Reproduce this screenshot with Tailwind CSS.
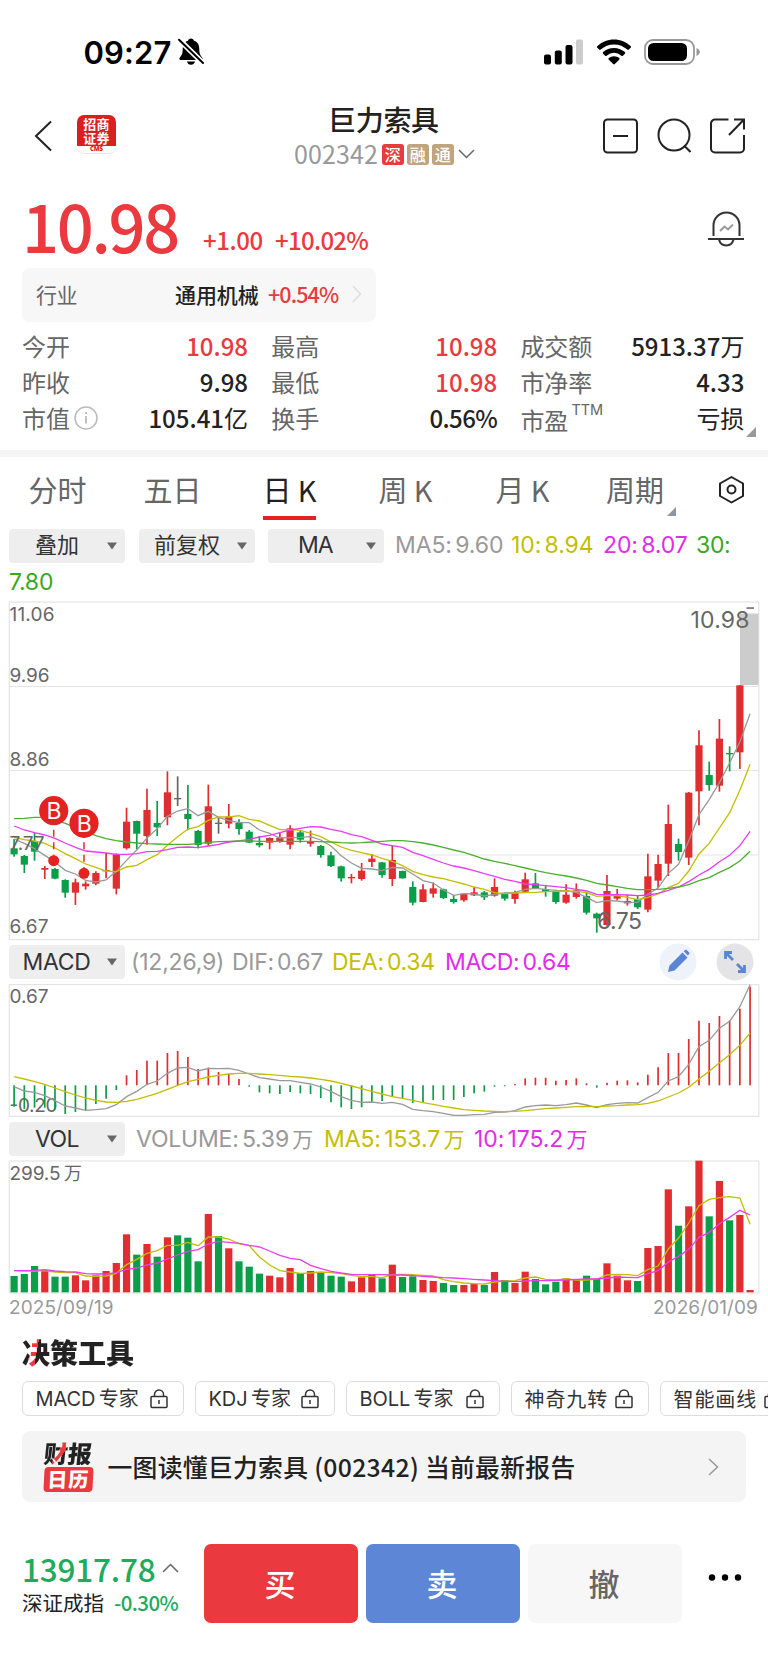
<!DOCTYPE html>
<html lang="zh-CN">
<head>
<meta charset="utf-8">
<title>巨力索具 002342</title>
<script src="https://cdn.jsdelivr.net/npm/@tailwindcss/browser@4"></script>
</head>
<body class="bg-white">
<div class="w-[768px] h-[1665px] overflow-hidden bg-white flex flex-col text-[#222] whitespace-nowrap font-['Noto_Sans_CJK_SC',sans-serif]">

  <!-- status bar -->
  <div class="h-[104px] shrink-0 flex items-center pl-[83.500px] pr-[67px]">
    <span class="font-['Inter',sans-serif] font-semibold text-[31px] tracking-[0.1px] text-black leading-none">09:27</span>
    <svg class="ml-1.5" width="28" height="30" viewBox="0 0 28 30"><path d="M14 1.500c1.600 0 2.800 1 3 2.300 4 1.300 5.300 4.600 5.300 8.700 0 4.500 1.200 6 3 8.200 .8 1 .4 2.300-1.100 2.300H3.800c-1.500 0-1.900-1.300-1.100-2.300 1.800-2.200 3-3.700 3-8.200 0-4.100 1.300-7.400 5.300-8.700 .2-1.300 1.400-2.300 3-2.300zM10 24.500h8c-.3 2-2 3.300-4 3.300s-3.700-1.300-4-3.300z" fill="#000"/><path d="M1 1.500 27 27" stroke="#fff" stroke-width="5.500"/><path d="M2 2.800 26 26" stroke="#000" stroke-width="2" stroke-linecap="round"/></svg>
    <div class="grow"></div>
    <svg width="39" height="26" viewBox="0 0 39 26"><rect x="0" y="15.500" width="7" height="10" rx="2"/><rect x="10.800" y="11.500" width="7" height="14" rx="2"/><rect x="21.500" y="6" width="7" height="19.500" rx="2"/><rect x="32" y="0.500" width="7" height="25" rx="2" fill="#ccc"/></svg>
    <svg class="ml-3.5" width="34" height="26" viewBox="0 0 34 26"><path d="M17 .5c6.400 0 12.200 2.500 16.600 6.600.5.500.5 1.100.1 1.600l-1.900 1.900c-.4.400-1 .4-1.500 0A19.400 19.400 0 0 0 17 5.400 19.400 19.400 0 0 0 3.700 10.600c-.5.400-1.100.4-1.500 0L.3 8.700c-.4-.5-.4-1.100.1-1.600C4.800 3 10.600.5 17 .5z"/><path d="M17 8.900c4.200 0 8 1.600 10.900 4.200.5.500.5 1.100 0 1.600l-2 2c-.4.400-1 .4-1.500 0A11 11 0 0 0 17 13.800a11 11 0 0 0-7.400 2.900c-.5.400-1.100.4-1.500 0l-2-2c-.5-.5-.5-1.100 0-1.600A16.200 16.200 0 0 1 17 8.900z"/><path d="M17 17.200c2 0 3.800.7 5.200 1.900.5.500.5 1.100 0 1.600l-4.400 4.400c-.5.500-1.100.5-1.600 0l-4.400-4.400c-.5-.5-.5-1.100 0-1.600A8 8 0 0 1 17 17.200z"/></svg>
    <svg class="ml-[13px]" width="57" height="26" viewBox="0 0 57 26"><rect x="1" y="1" width="49" height="24" rx="8" fill="none" stroke="#999" stroke-width="1.800"/><rect x="4" y="4" width="39" height="18" rx="5.500"/><path d="M52.500 9c2 .8 3.300 2.200 3.300 4s-1.300 3.200-3.300 4z" fill="#999"/></svg>
  </div>

  <!-- title bar -->
  <div class="h-[66px] shrink-0 grid grid-cols-[294px_1fr_294px]">
    <div class="flex pl-[34px] pt-[11px]">
      <svg class="mt-[5px]" width="19" height="32" viewBox="0 0 19 32"><path d="M17 1.500 2 16 17 30.500" fill="none" stroke="#222" stroke-width="2"/></svg>
      <div class="ml-6 w-[39px] h-[39px] rounded-[7px] bg-white border-b border-gray-200 overflow-hidden flex flex-col items-center">
        <div class="w-[39px] h-[31px] bg-[#da1f1f] text-white text-[13px] leading-[14px] tracking-[0.3px] font-bold flex flex-col items-center justify-center shrink-0"><div>招商<br>证券</div></div>
        <span class="font-['Open_Sans',sans-serif] text-[6px] leading-[7px] font-extrabold text-[#da1f1f]">CMS</span>
      </div>
    </div>
    <div class="flex flex-col">
      <div class="-mt-[2px] pl-[34px] text-[28px] leading-[34px] tracking-[-0.3px] font-medium">巨力索具</div>
      <div class="flex items-center h-8 mt-[2px]">
        <span class="text-[25px] leading-[28px] pb-[3px] tracking-[0.1px] text-[#999]">002342</span>
        <span class="ml-1 w-[22px] h-[21px] rounded-[3px] bg-[#ea3a40] text-white text-[16px] font-medium leading-[20px] text-center">深</span>
        <span class="ml-[3px] w-[22px] h-[21px] rounded-[3px] bg-[#bfa47e] text-white text-[16px] font-medium leading-[20px] text-center">融</span>
        <span class="ml-[3px] w-[22px] h-[21px] rounded-[3px] bg-[#bfa47e] text-white text-[16px] font-medium leading-[20px] text-center">通</span>
        <svg class="ml-1" width="17" height="10" viewBox="0 0 17 10"><path d="M1 1l7.500 7.500L16 1" fill="none" stroke="#666" stroke-width="1.500"/></svg>
      </div>
    </div>
    <div class="flex justify-end pr-[24px] pt-[14px] gap-[19px]">
      <svg width="35" height="36" viewBox="0 0 35 36" fill="none" stroke="#222" stroke-width="2"><rect x="1" y="1.500" width="33" height="33" rx="3.500"/><path d="M10 18h15"/></svg>
      <svg width="34" height="36" viewBox="0 0 34 36" fill="none" stroke="#222" stroke-width="2"><circle cx="17" cy="17" r="15.500"/><path d="M27 27.500l6.500 6.500"/></svg>
      <svg width="35" height="36" viewBox="0 0 35 36" fill="none" stroke="#222" stroke-width="2"><path d="M18.500 1.500H5A4 4 0 0 0 1 5.500v25a4 4 0 0 0 4 4h25a4 4 0 0 0 4-4V17M24 1.500h10v10M33.500 2 19 17"/></svg>
    </div>
  </div>

  <!-- price -->
  <div class="h-[98px] shrink-0 flex items-start pl-[22px] pr-[24px] text-[#ea3a40] font-medium">
    <span class="w-[181px] text-[65px] leading-[98px] pt-[6px] tracking-[-2.300px]">10.98</span>
    <span class="w-[72px] text-[24px] leading-[30px] mt-[55px] tracking-[-0.4px]">+1.00</span>
    <span class="text-[24px] leading-[30px] mt-[55px] tracking-[-0.7px]">+10.02%</span>
    <div class="grow"></div>
    <svg class="mt-[41px]" width="36" height="38" viewBox="0 0 36 38" fill="none" stroke="#333" stroke-width="2"><path d="M5.500 25V14.500a13 13 0 0 1 26 0V25M0 28h36M11 28.500a7.500 8 0 0 0 14.500 0"/><path d="M12 20l4.500-4.500 3.500 3 5-5" stroke="#999"/></svg>
  </div>

  <!-- industry -->
  <div class="ml-[22px] w-[354px] h-[54px] shrink-0 rounded-lg bg-[#f7f7f7] flex items-center px-[14px] pb-[2px] text-[21px] leading-none">
    <span class="text-[#666] w-[139px] tracking-[-0.5px]">行业</span>
    <span class="w-[93px] font-medium tracking-[-0.1px]">通用机械</span>
    <span class="text-[#ea3a40] font-medium text-[21.500px] tracking-[-0.9px]">+0.54%</span>
    <div class="grow"></div>
    <svg width="10" height="18" viewBox="0 0 10 18"><path d="M1 1l7.500 8L1 17" fill="none" stroke="#ddd" stroke-width="1.500"/></svg>
  </div>

  <!-- figures -->
  <div class="h-[128px] shrink-0 pt-[6px] pl-[22px] grid grid-cols-[226px_226px_224px] gap-x-[23.200px] auto-rows-[36px] text-[24px] leading-[36px] content-start relative">
    <div class="flex justify-between"><span class="text-[#666]">今开</span><span class="text-[#ea3a40] font-medium">10.98</span></div>
    <div class="flex justify-between"><span class="text-[#666]">最高</span><span class="text-[#ea3a40] font-medium">10.98</span></div>
    <div class="flex justify-between"><span class="text-[#666]">成交额</span><span class="font-medium">5913.37<span class="font-normal">万</span></span></div>
    <div class="flex justify-between"><span class="text-[#666]">昨收</span><span class="font-medium">9.98</span></div>
    <div class="flex justify-between"><span class="text-[#666]">最低</span><span class="text-[#ea3a40] font-medium">10.98</span></div>
    <div class="flex justify-between"><span class="text-[#666]">市净率</span><span class="font-medium">4.33</span></div>
    <div class="flex justify-between"><span class="text-[#666] flex items-center">市值<svg class="ml-1" width="24" height="24" viewBox="0 0 24 24" fill="none" stroke="#bbb" stroke-width="1.500"><circle cx="12" cy="12" r="11"/><path d="M12 10v7.500M12 6v2" stroke-width="1.800"/></svg></span><span class="font-medium">105.41<span class="font-normal">亿</span></span></div>
    <div class="flex justify-between"><span class="text-[#666]">换手</span><span class="font-medium tracking-[-0.6px]">0.56%</span></div>
    <div class="flex justify-between"><span class="text-[#666] flex pt-[2px]">市盈<span class="ml-[3px] text-[14.500px] leading-[15px] tracking-[-0.1px] font-['Inter',sans-serif]">TTM</span></span><span>亏损</span></div>
    <svg class="absolute left-[746px] top-[104.500px]" width="10" height="10" viewBox="0 0 10 10"><path d="M10 0v10H0z" fill="#999"/></svg>
  </div>

  <div class="h-[7px] shrink-0 bg-[#f4f4f4]"></div>

  <!-- period tabs -->
  <div class="h-[71px] shrink-0 grid grid-cols-[115px_115px_119px_113px_121px_104px_81px] text-center text-[29px] leading-[65px] text-[#666]">
    <span>分时</span>
    <span>五日</span>
    <span class="text-[#222] relative">日 K<i class="absolute left-[33px] top-[59px] w-[53px] h-[4px] bg-[#e82020]"></i></span>
    <span>周 K</span>
    <span>月 K</span>
    <span class="relative">周期<svg class="absolute left-[84px] top-[50px]" width="9" height="9" viewBox="0 0 9 9"><path d="M9 0v9H0z" fill="#8d95a0"/></svg></span>
    <svg class="ml-[30.500px] mt-[18px]" width="27" height="30" viewBox="0 0 27 30" fill="none" stroke="#222" stroke-width="2"><path d="M13.500 2 25 8.500v12.500L13.500 27.500 2 21V8.500z" stroke-linejoin="round"/><circle cx="13.500" cy="14.500" r="4"/></svg>
  </div>

  <!-- overlay selectors and moving averages -->
  <div class="h-[73px] shrink-0 pl-[9px] flex flex-col font-['Inter','Noto_Sans_CJK_SC',sans-serif] text-[23px] [word-spacing:-3px]">
    <div class="h-[35px] flex items-center">
      <div class="w-[116px] h-[34px] shrink-0 rounded bg-[#eee] flex items-center justify-between pl-[26px] pr-[8px] text-[22px] text-[#333]">叠加<svg width="10" height="8" viewBox="0 0 10 8"><path d="M0 .5h10L5 7.500z" fill="#666"/></svg></div>
      <div class="ml-[14px] w-[116px] h-[34px] shrink-0 rounded bg-[#eee] flex items-center justify-between pl-[15px] pr-[8px] text-[22px] text-[#333]">前复权<svg width="10" height="8" viewBox="0 0 10 8"><path d="M0 .5h10L5 7.500z" fill="#666"/></svg></div>
      <div class="ml-[13px] w-[116px] h-[34px] shrink-0 rounded bg-[#eee] flex items-center justify-between pl-[30px] pr-[8px] text-[#333] tracking-[-1px]">MA<svg width="10" height="8" viewBox="0 0 10 8"><path d="M0 .5h10L5 7.500z" fill="#666"/></svg></div>
      <span class="ml-[11px] w-[116px] text-[#999] tracking-[-0.1px]">MA5: 9.60</span>
      <span class="w-[92px] text-[#c4bd00] tracking-[-0.1px]">10: 8.94</span>
      <span class="w-[93px] text-[#e32be8] tracking-[-0.1px]">20: 8.07</span>
      <span class="text-[#38a81c] tracking-[-0.3px]">30:</span>
    </div>
    <div class="h-[38px] leading-[39px] text-[#38a81c] tracking-[-0.2px]">7.80</div>
  </div>

  <!-- candles -->
  <svg id="kline" class="shrink-0" width="768" height="340" viewBox="0 601 768 340"></svg>

  <!-- MACD header -->
  <div class="h-[43px] shrink-0 pl-[9px] flex items-center pb-[1px] font-['Inter','Noto_Sans_CJK_SC',sans-serif] text-[23px] [word-spacing:-3px]">
    <div class="w-[116px] h-[34px] shrink-0 rounded bg-[#eee] flex items-center justify-between pl-[13.500px] pr-[8px] text-[#333] tracking-[-0.3px]">MACD<svg width="10" height="8" viewBox="0 0 10 8"><path d="M0 .5h10L5 7.500z" fill="#666"/></svg></div>
    <span class="ml-[6px] w-[101px] text-[#999] tracking-[-0.2px]">(12,26,9)</span>
    <span class="w-[100px] text-[#999] tracking-[-0.3px]">DIF: 0.67</span>
    <span class="w-[113px] text-[#c4bd00] tracking-[-0.3px]">DEA: 0.34</span>
    <span class="w-[214px] text-[#e32be8] tracking-[-0.3px]">MACD: 0.64</span>
    <svg width="38" height="38" viewBox="0 0 38 38"><circle cx="19" cy="19" r="18.500" fill="#edf2fb"/><path d="M9 29l1.500-6.500L23.500 9.500l5 5L15.500 27.500zM24.700 8.300l1.300-1.100c.6-.6 1.300-.6 1.900 0l2.100 2.100c.6.600.6 1.300 0 1.900l-1.200 1.200z" fill="#5b84d7"/></svg>
    <svg class="ml-[19px]" width="38" height="38" viewBox="0 0 38 38"><circle cx="19" cy="19" r="18.500" fill="#e4e4e6"/><path d="M9.500 16V9.500H16M10 10l7 7M28.500 22v6.500H22M28 28l-7-7" fill="none" stroke="#5b84d7" stroke-width="2.800"/></svg>
  </div>
  <svg id="macd" class="shrink-0" width="768" height="134" viewBox="0 984 768 134"></svg>

  <!-- volume header -->
  <div class="h-[42px] shrink-0 pl-[9px] flex items-center font-['Inter','Noto_Sans_CJK_SC',sans-serif] text-[23px] [word-spacing:-3px]">
    <div class="w-[116px] h-[34px] shrink-0 rounded bg-[#eee] flex items-center justify-between pl-[26px] pr-[8px] text-[#333] tracking-[-0.6px]">VOL<svg width="10" height="8" viewBox="0 0 10 8"><path d="M0 .5h10L5 7.500z" fill="#666"/></svg></div>
    <span class="ml-[11px] w-[188px] text-[#999] tracking-[-0.2px]">VOLUME: 5.39 <span class="text-[21px]">万</span></span>
    <span class="w-[150px] text-[#c4bd00] tracking-[-0.1px]">MA5: 153.7 <span class="text-[21px]">万</span></span>
    <span class="text-[#e32be8] tracking-[-0.1px]">10: 175.2 <span class="text-[21px]">万</span></span>
  </div>
  <svg id="vol" class="shrink-0" width="768" height="134" viewBox="0 1160 768 134"></svg>
  <div class="h-[27px] shrink-0 flex justify-between pl-[9px] pr-[10px] text-[19px] leading-[28px] tracking-[0.1px] text-[#999] font-['Inter',sans-serif]"><span>2025/09/19</span><span>2026/01/09</span></div>

  <!-- tools -->
  <div class="h-[60px] shrink-0 pl-[22px] pt-[11px] text-[28px] leading-[40px] font-black"><span class="bg-[linear-gradient(100deg,#222_0_11px,#ea3a40_11px_18px,#222_18px)] bg-clip-text text-transparent">决策工具</span></div>
  <div class="h-[35px] shrink-0 pl-[21.500px] flex gap-[11px] text-[20px] text-[#333] leading-none [word-spacing:-2px]">
    <div class="chip w-[162px] shrink-0 rounded-md border border-[#ddd] flex items-center pl-[13px] pr-[15px] justify-between font-['Inter','Noto_Sans_CJK_SC',sans-serif] tracking-[-0.1px]"><span>MACD 专家</span></div>
    <div class="chip w-[140px] shrink-0 rounded-md border border-[#ddd] flex items-center pl-[13px] pr-[15px] justify-between font-['Inter','Noto_Sans_CJK_SC',sans-serif] tracking-[-0.1px]"><span>KDJ 专家</span></div>
    <div class="chip w-[154px] shrink-0 rounded-md border border-[#ddd] flex items-center pl-[13px] pr-[15px] justify-between font-['Inter','Noto_Sans_CJK_SC',sans-serif] tracking-[-0.1px]"><span>BOLL 专家</span></div>
    <div class="chip w-[138px] shrink-0 rounded-md border border-[#ddd] flex items-center pl-[13px] pr-[15px] justify-between tracking-[0.9px]"><span>神奇九转</span></div>
    <div class="chip w-[138px] shrink-0 rounded-md border border-[#ddd] flex items-center pl-[13px] pr-[15px] justify-between tracking-[0.9px]"><span>智能画线</span></div>
  </div>

  <!-- report banner -->
  <div class="mt-[15px] ml-[22px] w-[724px] h-[71px] shrink-0 rounded-lg bg-[#f4f4f4] flex items-center pl-[21px] pr-[27px]">
    <div class="w-[50px] h-[51px] flex flex-col items-center justify-between">
      <span class="text-[24px] leading-[24px] font-black -skew-x-6 bg-[linear-gradient(115deg,#222_0_17px,#ea3a40_17px_23px,#222_23px)] bg-clip-text text-transparent">财报</span>
      <span class="w-[49px] h-[25px] rounded bg-[#ea3a40] text-white text-[20px] leading-[24px] tracking-[1px] font-black text-center -skew-x-3">日历</span>
    </div>
    <span class="ml-[14.500px] pb-[1px] text-[24.800px] font-medium leading-none tracking-[0.3px]">一图读懂巨力索具 (002342) 当前最新报告</span>
    <div class="grow"></div>
    <svg width="11" height="18" viewBox="0 0 11 18"><path d="M1 1l8.500 8L1 17" fill="none" stroke="#999" stroke-width="1.500"/></svg>
  </div>

  <!-- trade bar -->
  <div class="mt-[42px] h-[79px] shrink-0 pl-[22px] flex">
    <div class="w-[182px]">
      <div class="flex items-center h-[46px] mt-px"><span class="text-[31.500px] leading-[46px] text-[#1fab5b] font-medium tracking-[-0.2px]">13917.78</span><svg class="ml-[7px]" width="17" height="10" viewBox="0 0 17 10"><path d="M1 9l7.500-7.500L16 9" fill="none" stroke="#666" stroke-width="1.500"/></svg></div>
      <div class="flex text-[20.500px] leading-[22px] h-6"><span class="w-[92px]">深证成指</span><span class="text-[#1fab5b] font-medium tracking-[-0.6px]">-0.30%</span></div>
    </div>
    <div class="flex gap-2 text-[31px] font-medium leading-[77px] text-center">
      <div class="w-[154px] rounded-[7px] bg-[#ea3a40] text-white pr-[2px]">买</div>
      <div class="w-[154px] rounded-[7px] bg-[#5d86d6] text-white pr-[2px]">卖</div>
      <div class="w-[154px] rounded-[7px] bg-[#f7f7f7] text-[#666] pr-[2px]">撤</div>
    </div>
    <svg class="ml-[26px] mt-[29px]" width="34" height="10" viewBox="0 0 34 10"><circle cx="4" cy="4.500" r="3.200"/><circle cx="17" cy="4.500" r="3.200"/><circle cx="30" cy="4.500" r="3.200"/></svg>
  </div>
</div>

<script>
const RED = '#e02d2f', GREEN = '#0c9d49', GRAY = '#666';
const colour = { r: RED, g: GREEN, k: GRAY };
const X = i => 14.1 + i * 10.222;
const rect = (x, y, w, h, f) => `<rect x="${x}" y="${y}" width="${w}" height="${h}" fill="${f}"/>`;
const vline = (x, a, b, c, w) => `<path d="M${x} ${a}V${b}" stroke="${c}" stroke-width="${w}"/>`;
const series = (v, y0, c) => `<polyline fill="none" stroke="${c}" stroke-width="1.300" points="${v.map((p, i) => X(i) + ',' + (y0 + p / 3)).join(' ')}"/>`;
const label = (t, x, y, w, size, c) => `<text x="${x}" y="${y}" textLength="${w}" font-size="${size}" fill="${c || '#666'}" font-family="Inter, 'Noto Sans CJK SC', sans-serif">${t}</text>`;
const frame = (y, h) => `<rect x="9.300" y="${y}" width="749.500" height="${h}" fill="none" stroke="#e4e4e4" stroke-width="1.200"/>`;
const nums = s => s.trim().split(/[\s,]+/).map(Number);

/* kind, high, body top, body bottom, low (thirds of a pixel) */
const candles = `g 297 325 343 350;g 345 348 374 399;g 279 303 335 362;r 378 384 389 417;g 384 387 416 418;g 418 420 458 473;r 416 427 458 495;r 424 431 439 449;r 394 399 431 436;r 338 390 394 415;r 340 343 446 463;r 203 245 325 329;g 242 243 281 328;r 146 210 288 314;g 183 249 262 288;r 94 157 232 256;k 109 174 178 198;g 135 222 237 271;g 270 273 315 325;r 134 199 311 317;k 232 248 251 281;r 192 230 251 265;g 238 249 267 284;g 270 275 308 309;g 288 309 316 322;r 292 294 308 328;r 279 293 303 308;r 256 265 314 328;g 270 277 299 308;r 272 306 311 320;g 315 318 345 353;g 335 346 378 381;g 377 379 415 425;r 402 411 415 430;r 369 392 417 422;r 343 356 366 381;g 366 367 405 413;r 317 360 417 438;g 392 393 415 416;g 424 441 488 496;r 433 448 486 487;r 428 445 461 473;g 446 448 474 477;g 465 477 486 491;r 459 461 481 485;r 441 457 466 468;g 453 457 472 480;r 415 441 467 470;g 457 459 476 482;r 452 458 477 491;r 398 418 455 456;g 399 430 445 446;g 435 447 456 470;g 449 454 486 491;r 433 464 488 491;r 430 451 471 476;g 456 468 518 524;g 518 521 535 578;r 405 453 555 557;r 447 467 476 481;r 464 483 490 497;g 468 477 502 507;r 341 409 509 517;r 344 372 422 443;r 194 252 371 408;g 296 312 336 362;r 156 158 353 375;r -29 16 154 256;g 65 105 135 152;r -63 -4 137 155;g 19 39 43 94;r -165 -164 37 87`.split(';').map(s => s.split(' '));
const ma5 = nums(`297 310 326 346 366 391 402 421 426 420 394 361 330 294 266 229 213 206 227 214 232 242 248 248 270 280 294 293 292 290 300 318 347 369 385 387 392 382 384 402 422 429 450 466 461 462 468 463 459 457 448 445 448 451 452 457 472 488 482 483 487 487 462 444 400 373 302 224 179 128 69 5 -79`);
const ma10 = nums(`292 299 303 310 324 341 356 372 382 393 395 381 376 359 344 316 290 267 260 241 231 231 227 238 243 256 269 269 271 280 290 306 321 331 338 345 355 364 377 394 404 411 416 424 432 441 448 458 461 459 458 457 455 454 453 454 458 469 467 467 472 479 472 462 443 430 393 342 310 264 218 151 73`);
const ma20 = nums(`258 270 278 285 295 309 322 333 336 339 343 343 341 335 334 329 322 321 323 318 313 306 303 298 291 286 278 270 265 260 261 268 274 284 290 301 312 317 322 337 347 358 369 378 384 392 401 409 418 424 432 434 437 440 443 448 453 463 464 464 465 467 465 460 451 441 425 405 388 365 346 317 274`);
const ma30 = nums(`236 235 232 232 240 250 262 275 287 296 302 306 309 311 312 313 313 313 311 307 305 304 303 303 304 304 304 304 304 304 305 306 308 309 308 306 304 302 302 305 309 315 322 330 337 347 357 364 370 377 384 391 398 403 408 414 421 430 435 440 445 449 449 448 445 441 434 422 413 397 383 363 334`);
let k = frame(602, 337.500);
for (const y of [686.500, 770.500, 855]) k += `<path d="M9 ${y}H758.500" stroke="#e4e4e4" stroke-width="1.200"/>`;
k += rect(740, 613.500, 18.500, 71.500, '#ccc');
candles.forEach(([c, h, t, b, l], i) => {
  const Y = v => 740 + v / 3;
  k += vline(X(i), Y(h), Y(l), colour[c], 1.700) + rect(X(i) - 3.600, Y(t), 7.200, Math.max(1.300, (b - t) / 3), colour[c]);
});
k += rect(746.500, 607.300, 7.500, 1.500, GRAY);
k += series(ma5, 740, '#999') + series(ma10, 740, '#c4bd00') + series(ma20, 740, '#e83cf0') + series(ma30, 740, '#4cae30');
k += label('11.06', 9.500, 621, 45, 19) + label('9.96', 9.500, 681.500, 40, 19) + label('8.86', 9.500, 765.500, 40, 19) + label('7.77', 9.500, 849.500, 35, 19) + label('6.67', 9.500, 933, 39, 19);
k += label('10.98', 690.500, 628.300, 59, 23) + label('6.75', 597, 928.500, 45, 23);
for (const [x, y] of [[53.700, 810.700], [84, 823.300]]) {
  k += `<path d="M${x} ${y + 19}v30" stroke="${RED}" stroke-width="1.500" stroke-dasharray="7 5.500"/><circle cx="${x}" cy="${y + 50}" r="5.500" fill="#e32222"/><circle cx="${x}" cy="${y}" r="14.600" fill="#e32222"/>` + `<text x="${x + .3}" y="${y + 8.500}" text-anchor="middle" font-size="23" fill="#fff" font-family="Inter, sans-serif">B</text>`;
}
document.getElementById('kline').innerHTML = k;

const hist = nums(`500 507 503 503 507 522 516 510 492 476 450 406 390 362 362 339 333 351 387 383 396 401 417 440 457 460 462 456 460 462 474 487 502 507 502 485 483 470 474 489 487 480 480 480 471 460 455 440 439 432 415 413 413 422 420 415 430 443 428 422 421 427 404 382 339 339 297 242 249 228 241 206 140`);
const dif = nums(`440 453 457 467 482 498 504 511 509 506 494 470 454 433 423 400 384 382 393 385 386 385 391 402 413 417 422 422 427 432 441 454 470 481 487 486 490 487 493 508 512 515 520 526 526 524 523 517 516 512 501 497 495 497 494 489 495 503 494 490 488 489 473 457 423 410 373 320 301 265 244 200 134`);
const dea = nums(`410 417 425 433 444 455 465 474 481 486 487 484 478 469 460 448 436 425 418 411 406 402 400 400 402 404 406 409 411 414 418 423 430 438 446 454 462 470 475 481 488 493 499 504 509 511 513 514 515 514 512 509 506 504 502 500 499 500 498 497 495 494 490 483 471 459 442 417 394 368 344 316 279`);
let m = frame(984.600, 131.700);
m += label('0.67', 9.500, 1003, 39, 19) + label('-0.20', 9.500, 1112, 48, 19);
hist.forEach((v, i) => { m += vline(X(i), 1085.300, 940 + v / 3, v > 436 ? GREEN : RED, 1.700); });
m += series(dif, 940, '#999') + series(dea, 940, '#c4bd00');
document.getElementById('macd').innerHTML = m;

const vols = `g1008 g1002 g978 r990 g1010 g1010 r1006 r1021 r1006 r993 r969 r883 g944 r912 g950 r892 g886 g893 g964 r822 g888 r925 g964 g980 g1001 r1007 r1012 r984 g999 r993 g996 g1007 g1010 r1024 r1012 r1005 g1015 r974 g1011 g1009 r1020 r1023 g1029 g1035 r1035 r1031 g1035 r996 g1020 r1029 r995 g1017 g1033 g1025 r1015 r1020 g1007 g1017 r970 r1007 r1021 g1023 r924 r918 r748 g857 r799 r662 g829 r723 g841 r825 r1050`.split(' ');
const v5 = nums(`992 993 993 992 996 998 998 1008 1009 1008 1000 974 958 940 932 916 916 907 917 891 891 897 911 917 951 975 992 996 1000 999 996 998 1001 1006 1010 1010 1013 1004 1003 1004 1006 1008 1019 1025 1029 1031 1032 1026 1023 1022 1014 1011 1018 1020 1017 1020 1020 1017 1005 1003 1004 1007 989 978 927 894 849 797 778 773 770 774 853`);
const v10 = nums(`992 992 991 989 993 995 996 1001 1002 1002 998 988 984 975 969 957 945 934 929 912 904 907 910 916 921 933 946 955 959 976 986 994 999 1003 1004 1004 1004 1005 1005 1007 1009 1011 1013 1014 1016 1018 1020 1022 1024 1025 1023 1022 1022 1021 1020 1018 1017 1017 1014 1011 1012 1013 1001 992 966 949 928 892 877 851 832 811 825`);
let v = frame(1161, 132);
v += label('299.5', 9.500, 1180, 51, 19) + label('万', 64, 1180, 17.500, 18);
vols.forEach((s, i) => { const t = +s.slice(1); v += rect(X(i) - 3.600, 940 + t / 3, 7.200, (1057 - t) / 3, colour[s[0]]); });
v += series(v5, 940, '#c4bd00') + series(v10, 940, '#e83cf0');
document.getElementById('vol').innerHTML = v;

document.querySelectorAll('.chip').forEach(c => {
  c.insertAdjacentHTML('beforeend', '<svg width="18" height="20" viewBox="0 0 18 20" fill="none" stroke="#333" stroke-width="1.500"><rect x="1" y="7.500" width="16" height="11" rx="1"/><path d="M4.500 7.500V5.500a4.500 4.500 0 0 1 9 0v2M9 11v4"/></svg>');
});
</script>
</body>
</html>
